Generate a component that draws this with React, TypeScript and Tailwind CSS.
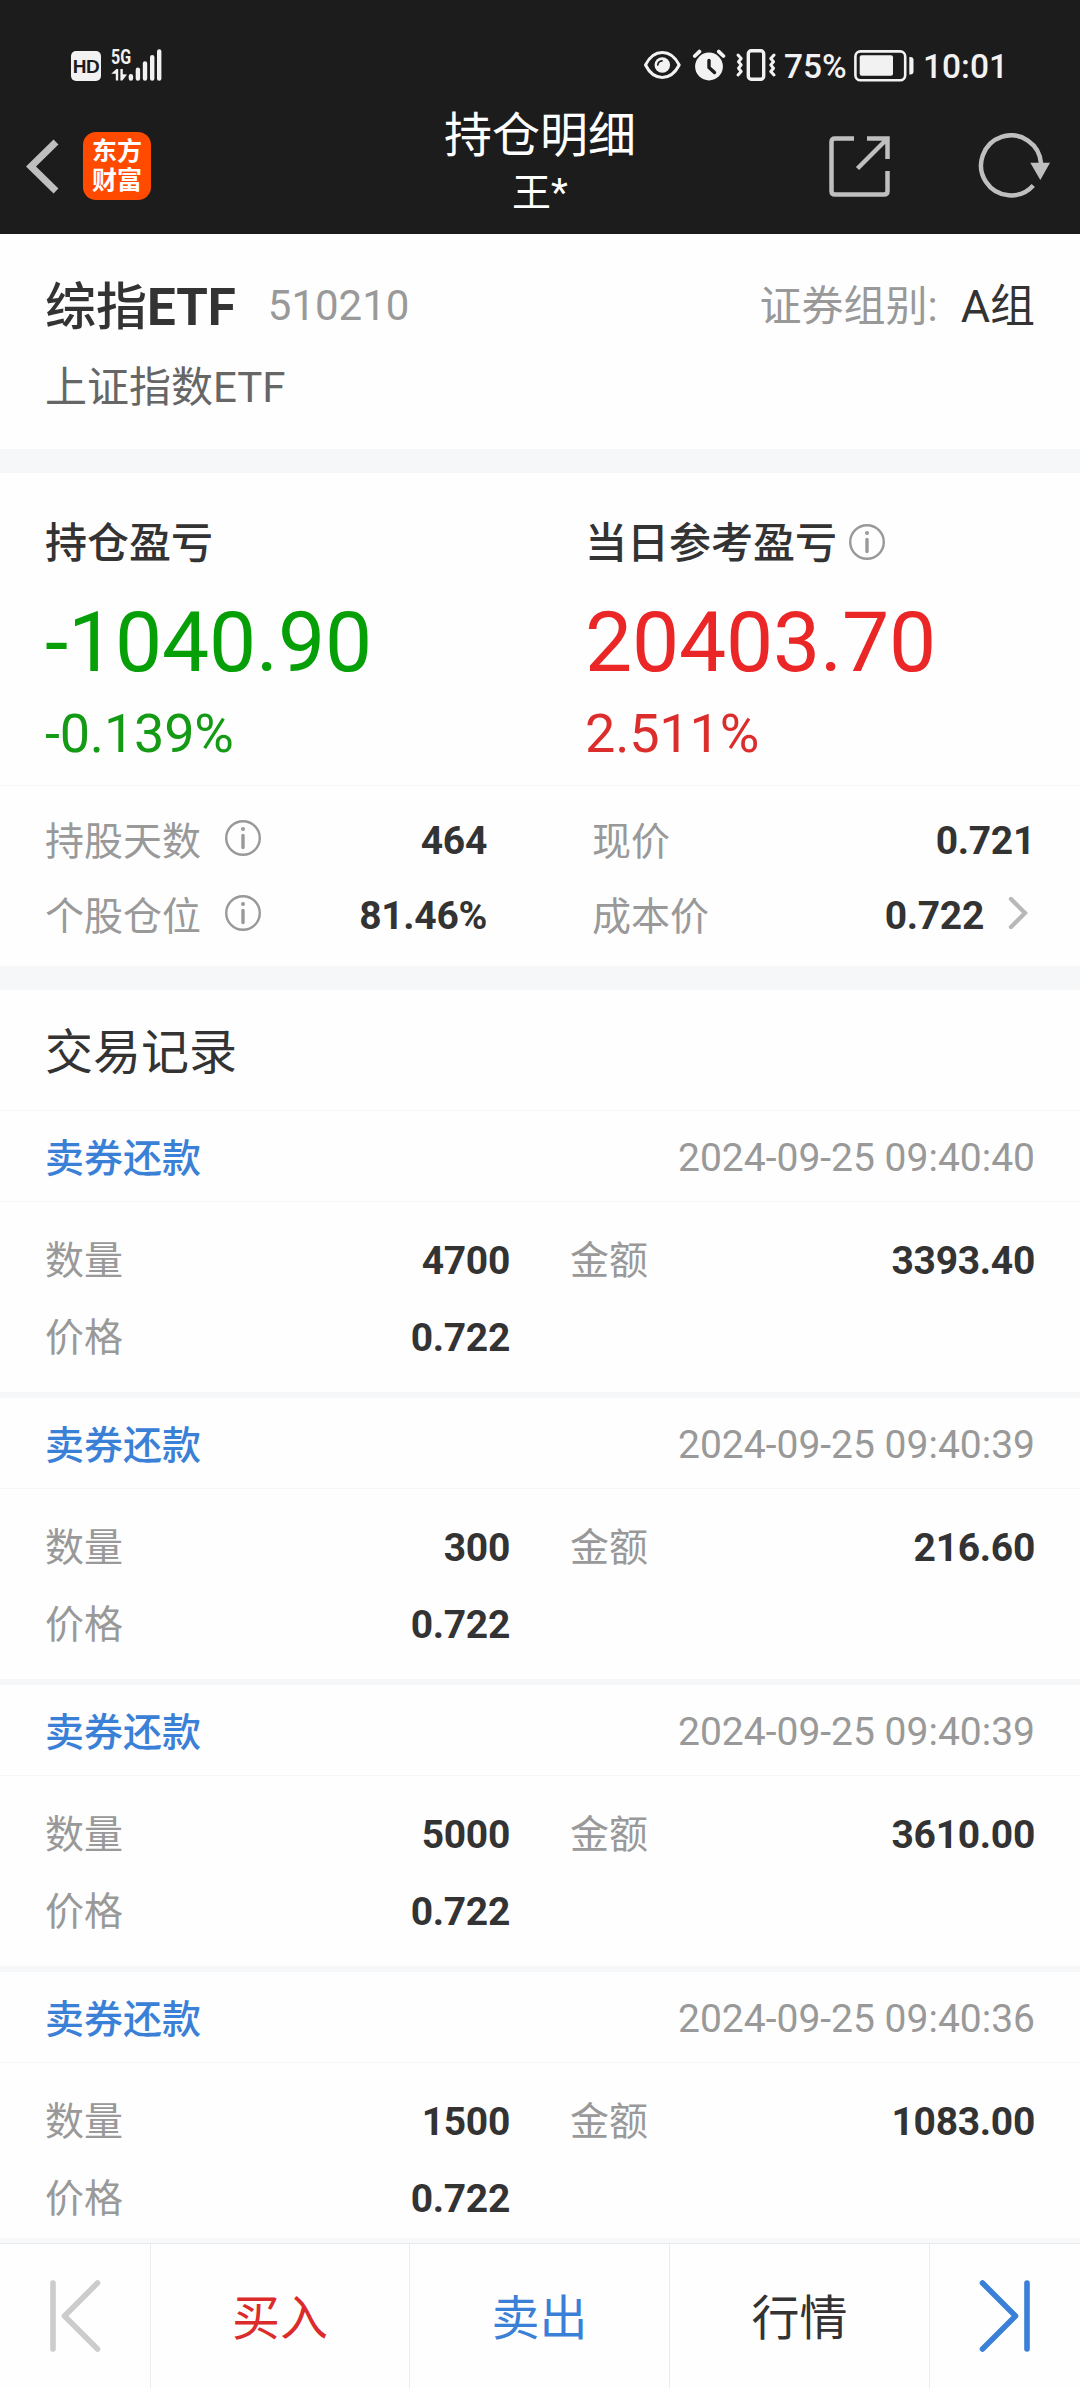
import type { ReactNode } from "react";

type TradeRecord = {
  action: string;
  time: string;
  quantity: string;
  amount: string;
  price: string;
};

const records: TradeRecord[] = [
  { action: "卖券还款", time: "2024-09-25 09:40:40", quantity: "4700", amount: "3393.40", price: "0.722" },
  { action: "卖券还款", time: "2024-09-25 09:40:39", quantity: "300", amount: "216.60", price: "0.722" },
  { action: "卖券还款", time: "2024-09-25 09:40:39", quantity: "5000", amount: "3610.00", price: "0.722" },
  { action: "卖券还款", time: "2024-09-25 09:40:36", quantity: "1500", amount: "1083.00", price: "0.722" },
];

function SignalIcon() {
  return (
    <svg viewBox="111 65 51 16" className="h-4 w-[51px]" fill="#f2f2f2" overflow="visible">
      <path d="M116.4 69h1.8v11.6h-2.4v-6.8h-4.6z" />
      <path d="M120.4 69h2.4v5.2l4.2 .4-4.6 6h-2z" />
      <rect x="128.7" y="74" width="4.4" height="6.8" rx="2.2" />
      <rect x="135.7" y="67.6" width="4.4" height="13.2" rx="2.2" />
      <rect x="142.8" y="61.3" width="4.4" height="19.5" rx="2.2" />
      <rect x="150" y="55" width="4.4" height="25.8" rx="2.2" />
      <rect x="157" y="49.3" width="4.4" height="31.5" rx="2.2" />
    </svg>
  );
}

function EyeIcon() {
  return (
    <svg viewBox="644 50 39 30" className="h-[30px] w-[39px]">
      <path
        d="M646.5 65C650 58 656 52.6 663.3 52.6S676.6 58 680.2 65C676.6 72 670.6 77.4 663.3 77.4S650 72 646.5 65Z"
        fill="none"
        stroke="#f2f2f2"
        strokeWidth="3"
        strokeLinejoin="round"
      />
      <circle cx="663.3" cy="65" r="7.8" fill="#f2f2f2" />
      <path d="M658.8 65a4.5 4.5 0 0 1 4.2-4.2" fill="none" stroke="#1c1c1c" strokeWidth="1.7" strokeLinecap="round" />
    </svg>
  );
}

function AlarmIcon() {
  return (
    <svg viewBox="693 49 34 32" className="h-8 w-[34px]">
      <circle cx="710" cy="66.5" r="13.9" fill="#f2f2f2" />
      <path d="M695.8 56l4.6-4.4M719.8 51.6l4.6 4.4" stroke="#f2f2f2" strokeWidth="3.8" strokeLinecap="round" />
      <path d="M710 60.5v7l5.5 5" fill="none" stroke="#1c1c1c" strokeWidth="3.4" strokeLinecap="round" strokeLinejoin="round" />
    </svg>
  );
}

function VibrateIcon() {
  return (
    <svg viewBox="736 48 41 34" className="h-[34px] w-[41px]" fill="none" stroke="#f2f2f2">
      <rect x="749.3" y="50.7" width="15.4" height="28.6" rx="3" strokeWidth="3.4" />
      <path d="M739 55l3.2 3.5-2.7 3.2 2.7 3.2-2.7 3.3 2.7 3.3-3.2 3.5" strokeWidth="3" strokeLinecap="round" strokeLinejoin="round" />
      <path d="M775 55l-3.2 3.5 2.7 3.2-2.7 3.2 2.7 3.3-2.7 3.3 3.2 3.5" strokeWidth="3" strokeLinecap="round" strokeLinejoin="round" />
    </svg>
  );
}

function BatteryIcon() {
  return (
    <svg viewBox="854 49 62 34" className="h-[34px] w-[62px]">
      <rect x="856.4" y="51.4" width="49.8" height="28.8" rx="5" fill="none" stroke="#f2f2f2" strokeWidth="2.6" />
      <rect x="860.7" y="55.3" width="33.3" height="20.5" rx="2" fill="#f2f2f2" />
      <path d="M910.3 57h1.2q3 0 3 3v11.5q0 3-3 3h-1.2z" fill="#f2f2f2" />
    </svg>
  );
}

function StatusBar() {
  return (
    <div className="flex h-[132px] items-start justify-between pl-[71px] pr-[73px] pt-12 text-[#f2f2f2]">
      <div className="flex pt-[3px]">
        <div className="flex h-[30px] w-[30px] items-center justify-center rounded-[5px] bg-[#f2f2f2] font-['Liberation_Sans',sans-serif] text-[19px] font-bold leading-none tracking-[-0.5px] text-[#1c1c1c]">
          HD
        </div>
        <div className="ml-[10px] flex w-[51px] flex-col">
          <span className="-mt-[3px] h-[17px] origin-left scale-x-[0.8] text-[20px] font-bold leading-[19px]">5G</span>
          <SignalIcon />
        </div>
      </div>
      <div className="flex h-[34px] items-center">
        <EyeIcon />
        <div className="ml-[10px]"><AlarmIcon /></div>
        <div className="ml-[9px]"><VibrateIcon /></div>
        <span className="ml-[8px] w-[62px] whitespace-nowrap pt-[3px] text-[33.5px] font-medium leading-[34px]">75%</span>
        <div className="ml-[7px] pt-[2px]"><BatteryIcon /></div>
        <span className="ml-[8px] w-[84px] whitespace-nowrap pt-[3px] text-[33.5px] font-medium leading-[34px]">10:01</span>
      </div>
    </div>
  );
}

function TitleBar() {
  return (
    <div className="grid h-[102px] grid-cols-[1fr_200px_1fr] items-start">
      <div className="flex pl-[26px]">
        <svg viewBox="26 138 34 58" className="mt-[6px] h-[58px] w-[34px]">
          <path d="M56 142L31 166.5L56 191" fill="none" stroke="#bfbfbf" strokeWidth="7" />
        </svg>
        <div className="ml-[23px] flex h-[68px] w-[68px] flex-col items-center justify-center rounded-[13px] bg-[#ff4a00] text-[25px] font-bold leading-[29px] text-white">
          <span>东方</span>
          <span>财富</span>
        </div>
      </div>
      <div className="-mt-[26px] flex flex-col items-center text-white">
        <h1 className="text-[48px] leading-[60px]">持仓明细</h1>
        <span className="text-[39px] leading-[55px]">王*</span>
      </div>
      <div className="flex justify-end pr-[29px]">
        <svg viewBox="829 136 62 62" className="mt-1 h-[62px] w-[62px]" fill="none" stroke="#bfbfbf" strokeWidth="4.5">
          <path d="M854 138.5H835q-3.5 0-3.5 3.5v49q0 3.5 3.5 3.5h49q3.5 0 3.5-3.5v-20" />
          <path d="M867 138.5h20.5V159M887 139L857.5 168.5" />
        </svg>
        <svg viewBox="978 133 73 66" className="ml-[87px] mt-px h-[66px] w-[73px]">
          <path d="M1041 163.5A30 30 0 1 0 1033.3 185.5" fill="none" stroke="#bfbfbf" strokeWidth="4.5" />
          <path d="M1030.3 162.7H1050L1040.3 180Z" fill="#bfbfbf" />
        </svg>
      </div>
    </div>
  );
}

function InfoIcon() {
  return (
    <svg viewBox="0 0 36 36" className="h-9 w-9 shrink-0" fill="none" stroke="#999999">
      <circle cx="18" cy="18" r="16.8" strokeWidth="2.4" />
      <path d="M18 15.5v12" strokeWidth="3.4" strokeLinecap="round" />
      <circle cx="18" cy="9" r="2" fill="#999999" stroke="none" />
    </svg>
  );
}

function Divider() {
  return <div className="h-6 bg-[#f6f7f9]" />;
}

function SecurityHeader() {
  return (
    <section className="h-[215px] px-[45px] pt-9">
      <div className="flex h-[72px] items-center justify-between">
        <div className="flex items-center">
          <h2 className="pt-[4px] text-[51px] font-bold leading-[60px] text-[#333333]">
            <span className="font-medium">综指</span>ETF
          </h2>
          <span className="ml-8 text-[42px] leading-[60px] text-[#999999]">510210</span>
        </div>
        <div className="flex items-center pt-[2px]">
          <span className="text-[42px] leading-[60px] text-[#999999]">证券组别:</span>
          <span className="ml-[23px] text-[45px] leading-[60px] text-[#333333]">A组</span>
        </div>
      </div>
      <p className="mt-4 text-[42px] leading-[60px] text-[#666666]">上证指数ETF</p>
    </section>
  );
}

function ProfitColumn({ title, info, children }: { title: string; info?: boolean; children: ReactNode }) {
  return (
    <div className="flex flex-col pl-[45px]">
      <div className="flex h-[60px] items-center gap-3 text-[42px] font-medium leading-[60px] text-[#333333]">
        <span className="pt-[2px]">{title}</span>
        {info && (
          <span className="-mt-[2px]">
            <InfoIcon />
          </span>
        )}
      </div>
      {children}
    </div>
  );
}

function StatRow({ label, value, info, arrow }: { label: string; value: string; info?: boolean; arrow?: boolean }) {
  return (
    <div className="flex h-[75px] items-center text-[39px] leading-[60px]">
      <span className="pt-[2px] text-[#999999]">{label}</span>
      {info && (
        <span className="-mt-[5px] ml-6">
          <InfoIcon />
        </span>
      )}
      <span className="ml-auto pt-px font-bold tracking-[-0.3px] text-[#333333]">{value}</span>
      {arrow && (
        <svg viewBox="0 0 20 34" className="-mt-[5px] ml-6 mr-[7px] h-[34px] w-5">
          <path d="M3 3L17 17L3 31" fill="none" stroke="#b8b8b8" strokeWidth="4.4" strokeLinecap="round" />
        </svg>
      )}
    </div>
  );
}

function Field({ label, value }: { label: string; value: string }) {
  return (
    <div className="flex justify-between">
      <span className="text-[#999999]">{label}</span>
      <span className="font-bold tracking-[-0.3px] text-[#333333]">{value}</span>
    </div>
  );
}

function Record({ record }: { record: TradeRecord }) {
  return (
    <article>
      <div className="flex h-[91px] items-center justify-between border-b border-[#f5f6f7] px-[45px] pt-[3px] text-[39px] leading-[60px]">
        <span className="pt-[2px] font-medium text-[#3b80d7]">{record.action}</span>
        <span className="text-[#999999]">{record.time}</span>
      </div>
      <div className="grid h-[190px] grid-cols-[465px_465px] content-start gap-x-[60px] px-[45px] pt-[21px] text-[39px] leading-[77px]">
        <Field label="数量" value={record.quantity} />
        <Field label="金额" value={record.amount} />
        <Field label="价格" value={record.price} />
      </div>
      <div className="h-[6px] bg-[#f6f7f9]" />
    </article>
  );
}

function BottomBar() {
  return (
    <nav className="shrink-0 border-t-[5px] border-[#f7f8f9] bg-[#fefefe]">
      <div className="grid h-[145px] grid-cols-[151px_259px_260px_260px_150px] border-t border-[#e9ebee] text-[48px] leading-[60px]">
        <button className="flex items-center border-r border-[#ececec] pl-[50px]">
          <svg viewBox="50 2281 51 72" className="h-[72px] w-[51px]" fill="none" stroke="#cccccc" strokeWidth="5.6" strokeLinecap="round" strokeLinejoin="round">
            <path d="M53 2284v66M97.5 2284L64.5 2317L97.5 2350" />
          </svg>
        </button>
        <button className="border-r border-[#ececec] pt-[5px] text-[#dc2b2b]">买入</button>
        <button className="border-r border-[#ececec] pt-[5px] text-[#3b80d7]">卖出</button>
        <button className="border-r border-[#ececec] pt-[5px] text-[#333333]">行情</button>
        <button className="flex items-center pl-[49px]">
          <svg viewBox="979 2281 52 72" className="h-[72px] w-[52px]" fill="none" stroke="#3b80d7" strokeWidth="5.6" strokeLinecap="round" strokeLinejoin="round">
            <path d="M1027 2284v66M982.5 2284L1015.5 2317L982.5 2350" />
          </svg>
        </button>
      </div>
    </nav>
  );
}

export default function App() {
  return (
    <div className="flex h-[2388px] w-[1080px] flex-col overflow-hidden bg-[#fefefe] font-['Roboto','Noto_Sans_CJK_SC',sans-serif]">
      <header className="h-[234px] shrink-0 bg-[#1c1c1c]">
        <StatusBar />
        <TitleBar />
      </header>
      <main className="min-h-0 flex-1 overflow-hidden">
        <SecurityHeader />
        <Divider />
        <section>
          <div className="grid h-[313px] grid-cols-2 border-b border-[#f5f6f7] pt-10">
            <ProfitColumn title="持仓盈亏">
              <span className="mt-[25px] text-[84px] leading-[90px] tracking-[-0.2px] text-[#079f07]">-1040.90</span>
              <span className="mt-4 text-[54px] leading-[60px] tracking-[-0.2px] text-[#149a14]">-0.139%</span>
            </ProfitColumn>
            <ProfitColumn title="当日参考盈亏" info>
              <span className="mt-[25px] text-[84px] leading-[90px] tracking-[-0.2px] text-[#ea2626]">20403.70</span>
              <span className="mt-4 text-[54px] leading-[60px] tracking-[-0.2px] text-[#dc2d2d]">2.511%</span>
            </ProfitColumn>
          </div>
          <div className="grid h-[180px] grid-cols-[442px_443px] gap-x-[105px] pl-[45px] pt-[17px]">
            <div>
              <StatRow label="持股天数" value="464" info />
              <StatRow label="个股仓位" value="81.46%" info />
            </div>
            <div>
              <StatRow label="现价" value="0.721" />
              <StatRow label="成本价" value="0.722" arrow />
            </div>
          </div>
        </section>
        <Divider />
        <h3 className="h-[121px] border-b border-[#f5f6f7] px-[45px] pt-[3px] text-[48px] leading-[120px] text-[#333333]">交易记录</h3>
        {records.map((record, index) => (
          <Record key={index} record={record} />
        ))}
      </main>
      <BottomBar />
    </div>
  );
}
